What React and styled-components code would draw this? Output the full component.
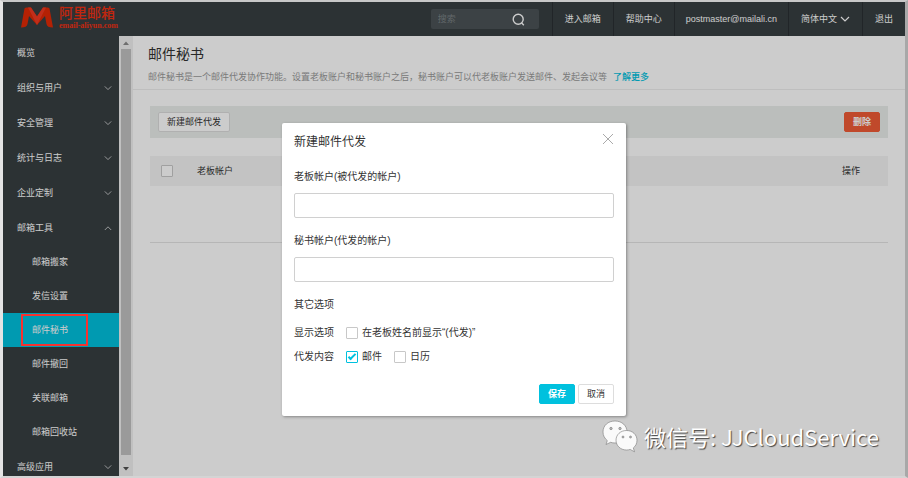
import React, { useState } from 'react';
import styled, { createGlobalStyle } from 'styled-components';

const GlobalStyle = createGlobalStyle`
  :root {
    --color-dark: #383f42;
    --color-primary: #00c1de;
    --color-danger: #f15c36;
    --color-brand: #f03012;
    --color-border: #d0d0d0;
    --text-color: #333;
    --text-color-muted: #999;
  }

  *,
  *::before,
  *::after {
    box-sizing: border-box;
  }

  body {
    background-color: #dcdcdc;
    color: var(--text-color);
    font-family: 'Liberation Sans', 'Noto Sans CJK SC', sans-serif;
    font-size: 9px;
    line-height: 14px;
    margin: 0;
  }

  button,
  input {
    font-family: inherit;
    font-size: inherit;
    line-height: inherit;
  }
`;

const Window = styled.div`
  border-color: #c8c8c8 #a8a8a8 #d4d4d4 #e4e4e4;
  border-style: solid;
  border-width: 2px 3px 2px 3px;
  display: flex;
  flex-direction: column;
  height: 100vh;
  overflow: hidden;
  position: relative;
`;

const TopBar = styled.header`
  align-items: stretch;
  background-color: var(--color-dark);
  color: #fff;
  display: flex;
  flex-shrink: 0;
  height: 34px;
`;

const Brand = styled.a`
  align-items: center;
  color: var(--color-brand);
  display: flex;
  gap: 6px;
  margin-right: auto;
  padding: 0 0 4px 18px;
  text-decoration: none;
`;

const BrandText = styled.span`
  display: flex;
  flex-direction: column;
`;

const BrandName = styled.span`
  font-size: 14px;
  font-weight: 500;
  line-height: 18px;
`;

const BrandDomain = styled.span`
  font-family: 'Liberation Serif', serif;
  font-size: 8px;
  font-weight: 700;
  line-height: 8px;
`;

const Search = styled.form`
  align-items: center;
  align-self: center;
  background-color: #4b5357;
  border-radius: 2px;
  display: flex;
  height: 20px;
  margin-right: 13px;
  padding: 0 14px 0 7px;
  width: 108px;
`;

const SearchInput = styled.input`
  background: none;
  border: none;
  color: #fff;
  flex: 1;
  min-width: 0;
  outline: none;
  padding: 0;

  &::placeholder {
    color: #7b8285;
  }
`;

const IconButton = styled.button`
  background: none;
  border: none;
  color: inherit;
  cursor: pointer;
  display: flex;
  padding: 0;
`;

const TopLink = styled.a`
  align-items: center;
  border-left: 1px solid #2a2f32;
  color: #fff;
  display: flex;
  gap: 3px;
  padding: 0 ${({ $compact }) => ($compact ? '11px' : '12px')};
  text-decoration: none;
  white-space: nowrap;
`;

const Body = styled.div`
  display: flex;
  flex: 1;
  min-height: 0;
`;

const Sidebar = styled.nav`
  background-color: var(--color-dark);
  flex-shrink: 0;
  overflow: hidden;
  width: 116px;
`;

const Menu = styled.ul`
  list-style: none;
  margin: 0;
  padding: 0;
`;

const MenuLink = styled.a`
  align-items: center;
  background-color: ${({ $active }) => ($active ? 'var(--color-primary)' : 'transparent')};
  color: #fff;
  display: flex;
  height: ${({ $group }) => ($group ? '35px' : '34px')};
  justify-content: space-between;
  padding: 0 7px 0 ${({ $sub }) => ($sub ? '29px' : '14px')};
  position: relative;
  text-decoration: none;
`;

const Highlight = styled.span`
  border: 2px solid #f8312f;
  bottom: 1px;
  left: 18px;
  position: absolute;
  top: 1px;
  width: 67px;
  z-index: 3;
`;

const ScrollBar = styled.div`
  align-items: center;
  background-color: #f1f1f1;
  display: flex;
  flex-direction: column;
  flex-shrink: 0;
  padding: 0 2px;
  width: 14px;
`;

const ScrollThumb = styled.div`
  align-self: stretch;
  background-color: #c1c1c1;
  flex: 1;
`;

const ScrollArrow = styled.svg`
  flex-shrink: 0;
  height: ${({ $tall }) => ($tall ? '21px' : '13px')};
  width: 10px;
`;

const Main = styled.main`
  background-color: #fff;
  flex: 1;
  min-width: 0;
`;

const PageHeader = styled.div`
  border-bottom: 1px solid #eee;
  padding: 8px 15px 5px;
`;

const PageTitle = styled.h1`
  font-size: 14px;
  font-weight: 400;
  line-height: 20px;
  margin: 0 0 6px;
`;

const PageIntro = styled.p`
  color: var(--text-color-muted);
  margin: 0;

  a {
    color: var(--color-primary);
    font-weight: 500;
    margin-left: 6px;
    text-decoration: none;
  }
`;

const PageContent = styled.div`
  padding: 16px 17px;
`;

const Toolbar = styled.div`
  align-items: center;
  background-color: #eaeeec;
  display: flex;
  height: 32px;
  justify-content: space-between;
  margin-bottom: 18px;
  padding: 0 8px;
`;

const buttonColors = {
  danger: 'var(--color-danger)',
  primary: 'var(--color-primary)',
};

const Button = styled.button`
  background-color: ${({ $kind }) => buttonColors[$kind] || '#fff'};
  border: 1px solid ${({ $kind }) => buttonColors[$kind] || '#ddd'};
  border-radius: 2px;
  color: ${({ $kind }) => ($kind ? '#fff' : 'var(--text-color)')};
  cursor: pointer;
  font-weight: ${({ $kind }) => ($kind ? 700 : 400)};
  height: 20px;
  padding: 0 8px;
`;

const Table = styled.table`
  border-bottom: 1px solid #e4e4e4;
  border-collapse: collapse;
  table-layout: fixed;
  width: 100%;

  th {
    background-color: #f4f4f4;
    font-weight: 400;
    height: 30px;
    padding: 0;
    text-align: left;
  }

  td {
    height: 56px;
    padding: 0;
  }
`;

const Col = styled.col`
  width: ${({ $width }) => $width || 'auto'};
`;

const Checkbox = styled.input.attrs({ type: 'checkbox' })`
  appearance: none;
  background-color: #fff;
  border: 1px solid #c8c8c8;
  border-radius: 1px;
  display: block;
  flex-shrink: 0;
  height: 12px;
  margin: 0;
  position: relative;
  width: 12px;

  th & {
    margin-left: 11px;
  }

  &:checked {
    border-color: var(--color-primary);
  }

  &:checked::after {
    border: solid var(--color-primary);
    border-width: 0 0 2px 2px;
    content: '';
    height: 4px;
    left: 1px;
    position: absolute;
    top: 2px;
    transform: rotate(-45deg);
    width: 8px;
  }
`;

const Backdrop = styled.div`
  align-items: flex-start;
  background-color: rgba(0, 0, 0, 0.2);
  display: flex;
  inset: 0;
  justify-content: center;
  padding-top: 121px;
  position: absolute;
  z-index: 2;
`;

const Dialog = styled.form`
  background-color: #fff;
  border-radius: 2px;
  box-shadow: 1px 1px 3px rgba(0, 0, 0, 0.35);
  font-size: 10px;
  line-height: 16px;
  max-width: 344px;
  padding: 9px 12px 12px;
  width: 100%;
`;

const DialogHeader = styled.div`
  align-items: flex-start;
  color: #aaa;
  display: flex;
  justify-content: space-between;
  margin-bottom: 17px;
`;

const DialogTitle = styled.h2`
  color: var(--text-color);
  font-size: 12px;
  font-weight: 400;
  line-height: 20px;
  margin: 0;
`;

const Field = styled.div`
  display: flex;
  flex-direction: column;
  gap: 8px;
  margin-bottom: 15px;
`;

const TextInput = styled.input`
  border: 1px solid var(--color-border);
  border-radius: 2px;
  height: 25px;
  padding: 0 6px;
  width: 100%;
`;

const SectionTitle = styled.h3`
  font-size: 10px;
  font-weight: 400;
  line-height: 16px;
  margin: 0 0 12px;
`;

const OptionRow = styled.div`
  align-items: center;
  display: flex;
  gap: 12px;
  margin-bottom: 8px;
`;

const Option = styled.label`
  align-items: center;
  display: flex;
  gap: 4px;
`;

const DialogFooter = styled.div`
  display: flex;
  font-size: 9px;
  gap: 3px;
  justify-content: flex-end;
  padding-top: 11px;
`;

const Watermark = styled.div`
  align-items: center;
  bottom: 22px;
  color: #fff;
  display: flex;
  font-family: 'Noto Sans CJK SC', sans-serif;
  font-size: 22px;
  gap: 6px;
  line-height: 36px;
  position: absolute;
  right: 26px;
  text-shadow: 1px 1px 1px #444;
  white-space: nowrap;
  z-index: 3;
`;

const Chevron = ({ size = 8, up = false }) => (
  <svg width={size} height={size} viewBox="0 0 10 10" fill="none" stroke="currentColor" opacity={size > 8 ? 1 : 0.7}>
    <path d={up ? 'M1 7.5 5 3.5l4 4' : 'M1 3l4 4 4-4'} strokeWidth="1.2" />
  </svg>
);

const LogoMark = () => (
  <svg width="32" height="21" viewBox="0 0 32 21">
    <path d="M3.5 1.500Q4 .5 6 .5H10L16 9.500 22 .5h4Q28 .5 28.500 1.500L32 20.500Q26 20.500 25.500 17L24 9 16 18 8 9 6.500 17Q6 20.500 0 20.500Z" fill="#e22a05" />
    <path d="M10 .5 16 9.500 22 .5h3L16 18 7 .5Z" fill="#f03a22" />
  </svg>
);

const WechatIcon = () => (
  <svg width="36" height="33" viewBox="0 0 36 33">
    <g fill="#fafafa" stroke="#777" strokeWidth="0.6">
      <path d="M13 1C6 1 1 5.500 1 12c0 3.600 1.700 6.500 4.300 8.600L4 24.500l4.600-2.200c1.400.5 2.800.7 4.400.7 7 0 12-4.700 12-11S20 1 13 1Z" />
      <path d="M24.500 10.500c-6 0-10.500 4.200-10.500 9.700S18.500 30 24.500 30c1.300 0 2.500-.2 3.700-.6l4.300 2.400-1.200-3.900c2.400-1.800 3.700-4.500 3.700-7.700 0-5.500-4.500-9.700-10.500-9.700Z" />
    </g>
    <g fill="#bbb" stroke="#777" strokeWidth="0.6">
      <circle cx="9" cy="8.500" r="1.200" />
      <circle cx="18" cy="8.500" r="1.200" />
      <circle cx="21" cy="17" r="1" />
      <circle cx="28.500" cy="17" r="1" />
    </g>
  </svg>
);

const menuItems = [
  { label: '概览' },
  { label: '组织与用户', group: true },
  { label: '安全管理', group: true },
  { label: '统计与日志', group: true },
  { label: '企业定制', group: true },
  {
    label: '邮箱工具',
    group: true,
    children: ['邮箱搬家', '发信设置', '邮件秘书', '邮件撤回', '关联邮箱', '邮箱回收站'],
  },
  { label: '高级应用', group: true },
];

const activeItem = '邮件秘书';

const MenuItem = ({ item }) => (
  <li>
    <MenuLink href="#" $group={item.group}>
      {item.label}
      {item.group && <Chevron up={Boolean(item.children)} />}
    </MenuLink>
    {item.children && (
      <Menu>
        {item.children.map((label) => (
          <li key={label}>
            <MenuLink href="#" $sub $active={label === activeItem}>
              {label}
              {label === activeItem && <Highlight />}
            </MenuLink>
          </li>
        ))}
      </Menu>
    )}
  </li>
);

const Header = () => (
  <TopBar>
    <Brand href="#">
      <LogoMark />
      <BrandText>
        <BrandName>阿里邮箱</BrandName>
        <BrandDomain>email-aliyun.com</BrandDomain>
      </BrandText>
    </Brand>
    <Search>
      <SearchInput type="search" placeholder="搜索" aria-label="搜索" />
      <IconButton type="button" aria-label="搜索">
        <svg width="13" height="13" viewBox="0 0 13 13" fill="none" stroke="currentColor" strokeWidth="1.4">
          <circle cx="6.200" cy="6.200" r="5" />
          <path d="m9.500 9.800 2.300 2.400" />
        </svg>
      </IconButton>
    </Search>
    <TopLink href="#">进入邮箱</TopLink>
    <TopLink href="#">帮助中心</TopLink>
    <TopLink href="#" $compact>
      postmaster@mailali.cn
    </TopLink>
    <TopLink href="#">
      简体中文 <Chevron size={10} />
    </TopLink>
    <TopLink href="#">退出</TopLink>
  </TopBar>
);

const DelegateDialog = ({ onClose }) => (
  <Backdrop>
    <Dialog role="dialog" aria-labelledby="dialog-title" onSubmit={(e) => e.preventDefault()}>
      <DialogHeader>
        <DialogTitle id="dialog-title">新建邮件代发</DialogTitle>
        <IconButton type="button" aria-label="关闭" onClick={onClose}>
          <svg width="12" height="14" viewBox="0 0 12 14" fill="none" stroke="currentColor">
            <path d="m1 2 10 10M11 2 1 12" />
          </svg>
        </IconButton>
      </DialogHeader>
      <Field>
        <label htmlFor="boss">老板帐户(被代发的帐户)</label>
        <TextInput id="boss" type="text" />
      </Field>
      <Field>
        <label htmlFor="secretary">秘书帐户(代发的帐户)</label>
        <TextInput id="secretary" type="text" />
      </Field>
      <SectionTitle>其它选项</SectionTitle>
      <OptionRow>
        <span>显示选项</span>
        <Option>
          <Checkbox />
          在老板姓名前显示“(代发)”
        </Option>
      </OptionRow>
      <OptionRow>
        <span>代发内容</span>
        <Option>
          <Checkbox defaultChecked />
          邮件
        </Option>
        <Option>
          <Checkbox />
          日历
        </Option>
      </OptionRow>
      <DialogFooter>
        <Button type="submit" $kind="primary">
          保存
        </Button>
        <Button type="button" onClick={onClose}>
          取消
        </Button>
      </DialogFooter>
    </Dialog>
  </Backdrop>
);

const App = () => {
  const [open, setOpen] = useState(true);

  return (
    <Window>
      <GlobalStyle />
      <Header />
      <Body>
        <Sidebar>
          <Menu>
            {menuItems.map((item) => (
              <MenuItem key={item.label} item={item} />
            ))}
          </Menu>
        </Sidebar>
        <ScrollBar>
          <ScrollArrow viewBox="0 0 10 13">
            <path d="M2 9l3-3.500L8 9Z" fill="#8a8a8a" />
          </ScrollArrow>
          <ScrollThumb />
          <ScrollArrow $tall viewBox="0 0 10 21">
            <path d="M2 12l3 3.500L8 12Z" fill="#505050" />
          </ScrollArrow>
        </ScrollBar>
        <Main>
          <PageHeader>
            <PageTitle>邮件秘书</PageTitle>
            <PageIntro>
              邮件秘书是一个邮件代发协作功能。设置老板账户和秘书账户之后，秘书账户可以代老板账户发送邮件、发起会议等
              <a href="#">了解更多</a>
            </PageIntro>
          </PageHeader>
          <PageContent>
            <Toolbar>
              <Button type="button" onClick={() => setOpen(true)}>
                新建邮件代发
              </Button>
              <Button type="button" $kind="danger">
                删除
              </Button>
            </Toolbar>
            <Table>
              <colgroup>
                <Col $width="47px" />
                <Col />
                <Col $width="46px" />
              </colgroup>
              <thead>
                <tr>
                  <th>
                    <Checkbox aria-label="全选" />
                  </th>
                  <th>老板帐户</th>
                  <th>操作</th>
                </tr>
              </thead>
              <tbody>
                <tr>
                  <td colSpan={3} />
                </tr>
              </tbody>
            </Table>
          </PageContent>
        </Main>
      </Body>
      {open && <DelegateDialog onClose={() => setOpen(false)} />}
      <Watermark>
        <WechatIcon />
        <span>微信号: JJCloudService</span>
      </Watermark>
    </Window>
  );
};

export default App;
